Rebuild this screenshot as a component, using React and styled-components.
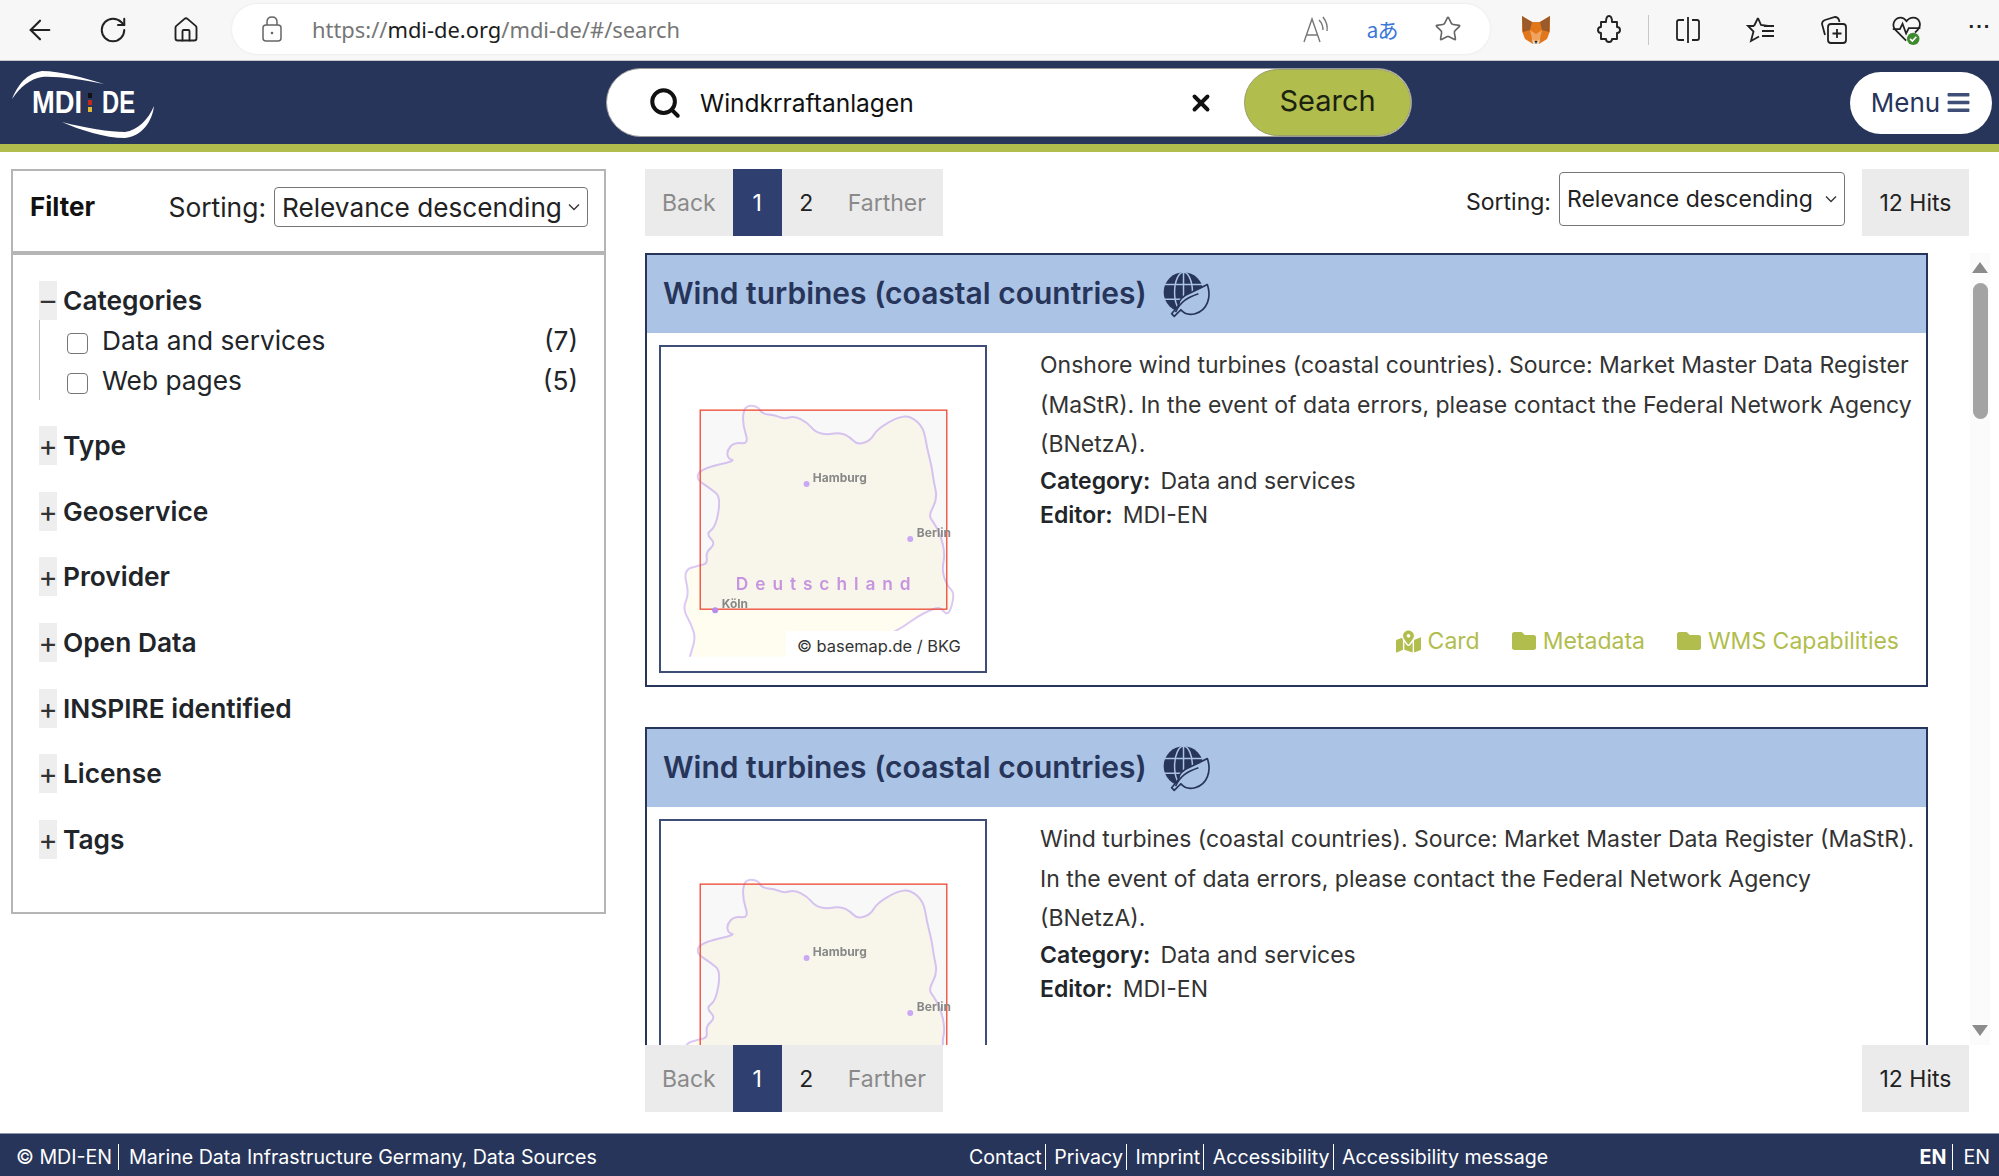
import React from "react";
import styled, { createGlobalStyle } from "styled-components";
import { ArrowLeft, RotateCw, Home, Star, Search, X } from "lucide-react";
import { FaBars, FaFolder, FaMapMarkedAlt } from "react-icons/fa";

const navy = "#27355a";
const olive = "#b1bd4d";
const band = "#abc3e5";

const GlobalStyle = createGlobalStyle`
  html, body {
    margin: 0;
    height: 100%;
    overflow: hidden;
    background: #fff;
    font-family: Inter, "Liberation Sans", sans-serif;
    color: #212529;
  }
  * { box-sizing: border-box; }
`;

const Page = styled.div`
  height: 1176px;
  display: flex;
  flex-direction: column;
`;

/* browser chrome */
const BrowserBar = styled.div`
  height: 61px;
  flex: none;
  display: flex;
  align-items: center;
  padding-left: 22px;
  background: #f7f7f7;
  border-bottom: 1px solid #c9c9c9;
  color: #222;
`;

const ToolGroup = styled.div`
  display: flex;
  align-items: center;
  gap: 37px;
`;

const ToolSlot = styled.div`
  position: relative;
  width: 36px;
  height: 36px;
  display: flex;
  align-items: center;
  justify-content: center;
  color: ${({ $muted }) => ($muted ? "#666" : "#222")};
`;

const ToolDivider = styled.div`
  width: 1px;
  height: 30px;
  margin: 0 -16px;
  background: #c8c8c8;
`;

const AddressPill = styled.div`
  width: 1258px;
  height: 50px;
  margin: 0 28px 2px 28px;
  display: flex;
  align-items: center;
  padding: 0 24px 0 28px;
  background: #fff;
  border-radius: 25px;
  box-shadow: 0 0 3px rgba(0, 0, 0, 0.08);
`;

const Url = styled.div`
  margin-left: 28px;
  flex: 1;
  font-family: "Noto Sans", sans-serif;
  font-size: 21.9px;
  color: #767676;
  b {
    font-weight: 400;
    color: #1c1c1c;
  }
`;

const AddressTools = styled.div`
  display: flex;
  align-items: center;
  gap: 30px;
`;

const TranslateGlyph = styled.span`
  font-family: "Noto Sans CJK JP", sans-serif;
  font-size: 21px;
  letter-spacing: -1px;
  color: #3b78d8;
`;

const MoreDots = styled.span`
  font-family: "Liberation Sans", sans-serif;
  font-weight: 700;
  font-size: 20px;
  letter-spacing: 1px;
  margin-top: -8px;
  color: #222;
`;

/* site header */
const SiteHeader = styled.header`
  height: 83px;
  flex: none;
  display: flex;
  align-items: center;
  background: ${navy};
`;

const LogoWrap = styled.div`
  width: 180px;
  height: 83px;
  flex: none;
  margin-right: 426px;
`;

const SearchBox = styled.div`
  width: 806px;
  height: 69px;
  display: flex;
  align-items: center;
  padding-left: 41px;
  background: #fff;
  border: 1px solid #9a9a9a;
  border-radius: 35px;
`;

const SearchText = styled.div`
  flex: 1;
  margin-left: 18px;
  font-size: 24.5px;
  color: #111;
`;

const SearchButton = styled.button`
  width: 167px;
  height: 67px;
  margin-left: 30px;
  padding: 0 0 4px;
  border: 1px solid #9aa06a;
  border-radius: 34px;
  background: ${olive};
  font-family: inherit;
  font-size: 29px;
  color: #1c2210;
`;

const MenuButton = styled.button`
  width: 142px;
  height: 62px;
  margin-left: auto;
  margin-right: 7px;
  display: flex;
  align-items: center;
  justify-content: center;
  gap: 6px;
  border: none;
  border-radius: 31px;
  background: #fff;
  font-family: inherit;
  font-size: 26px;
  color: #27355a;
  svg {
    color: #3f4e76;
  }
`;

const GreenStripe = styled.div`
  height: 8px;
  flex: none;
  background: ${olive};
`;

/* main */
const Main = styled.main`
  flex: 1;
  min-height: 0;
  display: flex;
  align-items: flex-start;
  padding: 17px 10px 0 11px;
`;

const FilterPanel = styled.aside`
  width: 595px;
  height: 745px;
  flex: none;
  border: 2px solid #b5b5b5;
`;

const FilterHead = styled.div`
  height: 84px;
  display: flex;
  align-items: flex-start;
  padding: 16px 16px 0 17px;
  border-bottom: 4px solid #b5b5b5;
`;

const FilterTitle = styled.div`
  font-size: 26px;
  font-weight: 700;
  line-height: 40px;
  color: #111;
`;

const SortLabel = styled.span`
  margin-left: auto;
  padding-top: ${({ $small }) => ($small ? "5px" : "0")};
  font-size: ${({ $small }) => ($small ? "23px" : "26.4px")};
  line-height: 40px;
  color: #222;
`;

const SortSelect = styled.div`
  width: ${({ $small }) => ($small ? "286px" : "314px")};
  height: ${({ $small }) => ($small ? "54px" : "40px")};
  margin-left: 8px;
  display: flex;
  align-items: center;
  justify-content: space-between;
  padding: ${({ $small }) => ($small ? "0 6px 0 7px" : "0 6px 0 7px")};
  border: 1px solid #767676;
  border-radius: 4px;
  font-size: ${({ $small }) => ($small ? "23px" : "26.2px")};
  color: #222;
  white-space: nowrap;
  background: #fff;
`;

const FilterList = styled.div`
  padding: 26px 26px 0 26px;
`;

const FacetBlock = styled.div`
  margin-bottom: ${({ $open }) => ($open ? "26px" : "26.7px")};
`;

const FacetHead = styled.div`
  height: 39px;
  display: flex;
  align-items: center;
  font-size: 26.3px;
  font-weight: 600;
  color: #212529;
`;

const FacetToggle = styled.span`
  width: 18px;
  height: 39px;
  margin-right: 6px;
  display: flex;
  align-items: center;
  justify-content: center;
  background: #eee;
  font-weight: 400;
  font-size: 29px;
  color: #333;
`;

const FacetBody = styled.div`
  border-left: 1px solid #bdbdbd;
`;

const FacetRow = styled.div`
  height: 40px;
  display: flex;
  align-items: center;
  padding-left: 27px;
  font-size: 26.3px;
  color: #212529;
`;

const CheckBox = styled.span`
  width: 21px;
  height: 21px;
  margin: 6px 14px 0 0;
  flex: none;
  border: 1px solid #767676;
  border-radius: 4px;
  background: #fff;
`;

const FacetCount = styled.span`
  margin-left: auto;
`;

const Results = styled.section`
  width: 1324px;
  margin-left: 39px;
  flex: none;
  display: flex;
  flex-direction: column;
`;

const ResultBar = styled.div`
  height: 67px;
  flex: none;
  display: flex;
  align-items: flex-start;
`;

const Pager = styled.div`
  display: flex;
  height: 67px;
  background: #ebebeb;
  font-size: 23px;
  line-height: 69px;
`;

const PageItem = styled.span`
  padding: 0 17px;
  color: ${({ $dim }) => ($dim ? "#8a8a8a" : "#222")};
`;

const PageNumber = styled.span`
  width: 49px;
  text-align: center;
  color: ${({ $active }) => ($active ? "#fff" : "#222")};
  background: ${({ $active }) => ($active ? "#2f4070" : "transparent")};
`;

const HitCount = styled.div`
  width: 107px;
  height: 67px;
  margin-left: ${({ $push }) => ($push ? "auto" : "16px")};
  text-align: center;
  background: #ebebeb;
  font-size: 23px;
  line-height: 69px;
  color: #222;
`;

const TopSort = styled.div`
  margin-left: auto;
  display: flex;
  align-items: center;
  margin-top: 3px;
  margin-right: 1px;
  height: 54px;
`;

const ScrollArea = styled.div`
  height: 792px;
  flex: none;
  margin-top: 17px;
  display: flex;
  gap: 42px;
  margin-right: -22px;
  overflow: hidden;
`;

const CardList = styled.div`
  width: 1283px;
  flex: none;
  display: flex;
  flex-direction: column;
  gap: 40px;
`;

const Card = styled.article`
  flex: none;
  height: 434px;
  border: 2px solid ${navy};
  display: flex;
  flex-direction: column;
`;

const CardHead = styled.div`
  height: 78px;
  flex: none;
  display: flex;
  align-items: center;
  gap: 16px;
  padding: 0 0 1px 16px;
  background: ${band};
`;

const CardTitle = styled.h2`
  margin: 0 0 2px;
  font-size: 30px;
  font-weight: 600;
  color: ${navy};
`;

const CardBody = styled.div`
  flex: 1;
  display: flex;
  padding: 12px 6px 12px 12px;
`;

const MapFrame = styled.div`
  position: relative;
  width: 328px;
  height: 328px;
  flex: none;
  border: 2px solid #3f4e76;
  background: #fff;
`;

const MapCredit = styled.span`
  position: absolute;
  right: 0;
  bottom: 0;
  width: 199px;
  height: 40px;
  padding: 5px 0 0 11px;
  background: #fff;
  font-size: 16.4px;
  color: #333;
`;

const CardText = styled.div`
  flex: 1;
  display: flex;
  flex-direction: column;
  margin-left: 53px;
  padding-top: 1px;
  font-size: 23px;
  color: #333;
`;

const Description = styled.p`
  margin: 0 0 -1px;
  line-height: 39.5px;
`;

const MetaLine = styled.div`
  display: flex;
  gap: 10px;
  line-height: 34.5px;
  b {
    font-weight: 600;
    color: #212529;
  }
`;

const LinkRow = styled.div`
  margin-top: auto;
  margin-bottom: 18px;
  display: flex;
  justify-content: flex-end;
  gap: 32px;
  padding-right: 21px;
`;

const ResultLink = styled.a`
  display: flex;
  align-items: center;
  gap: 7px;
  font-size: 23px;
  color: ${olive};
`;

const ScrollTrack = styled.div`
  width: 20px;
  flex: none;
  background: #fbfbfb;
  display: flex;
  flex-direction: column;
  align-items: center;
`;

const ScrollArrow = styled.span`
  width: 0;
  height: 0;
  flex: none;
  margin: ${({ $down }) => ($down ? "auto 0 9px" : "9px 0 0")};
  border-left: 8px solid transparent;
  border-right: 8px solid transparent;
  ${({ $down }) => ($down ? "border-top" : "border-bottom")}: 11px solid #8b8b8b;
`;

const ScrollThumb = styled.span`
  width: 15px;
  height: 136px;
  margin-top: 10px;
  border-radius: 8px;
  background: #a3a3a3;
`;

/* footer */
const Footer = styled.footer`
  margin-top: auto;
  height: 43px;
  flex: none;
  display: grid;
  grid-template-columns: 953px 1fr auto;
  align-items: center;
  padding: 4px 9px 0 16px;
  background: ${navy};
  border-top: 1px solid #8d95ab;
  font-size: 19.6px;
  color: #fff;
`;

const FootGroup = styled.div`
  display: flex;
  align-items: center;
`;

const FootItem = styled.span`
  white-space: nowrap;
  padding: ${({ $wide }) => ($wide ? "0 6px 0 10px" : "0 3px 0 0")};
  margin-right: ${({ $wide }) => ($wide ? "0" : "8.5px")};
  border-right: ${({ $last }) => ($last ? "none" : "1px solid #fff")};
  line-height: 26px;
  font-weight: ${({ $bold }) => ($bold ? 700 : 400)};
  &:first-child {
    padding-left: 0;
  }
  &:last-child {
    margin-right: 0;
    padding-right: 0;
  }
`;

const Logo = () => (
  <svg width="180" height="83" viewBox="0 0 180 83">
    <path d="M12 38 C20 19 30 12 42 10 C60 10 85 17 104 23 C80 18 55 15 42 16 C30 18 20 26 12 38Z" fill="#fff" />
    <path d="M62 61 C85 67 110 71 125 71 C138 69 148 59 154 45 C152 61 142 75 125 77 C105 77 80 69 62 61Z" fill="#fff" />
    <text x="32" y="52" fontFamily="Liberation Sans" fontSize="31" fontWeight="700" fill="#fff" textLength="50" lengthAdjust="spacingAndGlyphs">MDI</text>
    <rect x="88" y="32" width="4" height="5" fill="#111" />
    <rect x="88" y="39" width="4" height="5" fill="#c4281c" />
    <rect x="88" y="46" width="4" height="5" fill="#e0b83a" />
    <text x="102" y="52" fontFamily="Liberation Sans" fontSize="31" fontWeight="700" fill="#fff" textLength="33" lengthAdjust="spacingAndGlyphs">DE</text>
  </svg>
);

const LockIcon = () => (
  <svg width="24" height="28" viewBox="0 0 24 28" fill="none" stroke="#666" strokeWidth="1.5">
    <rect x="3" y="10" width="18" height="16" rx="3" />
    <path d="M7 10 V7 Q7 2 12 2 Q17 2 17 7 V10" />
    <circle cx="12" cy="18" r="1.3" fill="#666" stroke="none" />
  </svg>
);

const ReadAloud = () => (
  <svg width="34" height="34" viewBox="0 0 34 34" fill="none" stroke="#777" strokeWidth="1.4">
    <path d="M5 30 L13 7 L21 30 M8 23 H18" />
    <path d="M20 8 C23 11 24 14 24 18 M24 5 C27 9 29 13 28 19" />
  </svg>
);

const Fox = () => (
  <svg width="30" height="30" viewBox="0 0 30 30">
    <path d="M1 1 L11 7 H19 L29 1 L29 16 L26 24 L18 29 H12 L4 24 L1 16Z" fill="#e2761b" />
    <path d="M1 1 L11 7 L9 15 L2 17Z M29 1 L19 7 L21 15 L28 17Z" fill="#9a5a2a" />
    <path d="M9 15 L15 19 L21 15 L19 24 L15 27 L11 24Z" fill="#f0a35c" />
    <path d="M11 24 L15 27 L19 24 L18 29 H12Z" fill="#e8d8c8" />
    <path d="M13.5 26 H16.5 L15 29Z" fill="#222" />
  </svg>
);

const ExtensionIcon = () => (
  <svg width="32" height="32" viewBox="0 0 32 32" fill="none" stroke="#222" strokeWidth="1.9" strokeLinejoin="round">
    <path d="M8 8 H13 C13 4 14 2 16 2 C18 2 19 4 19 8 H24 V13 C28 13 28 19 24 19 V25 H19 C19 29 13 29 13 25 H8 V19 C4 19 4 13 8 13 Z" />
  </svg>
);

const SplitIcon = () => (
  <svg width="30" height="30" viewBox="0 0 30 30" fill="none" stroke="#222" strokeWidth="1.8">
    <path d="M11 5 H6 Q4 5 4 7 V23 Q4 25 6 25 H11 M19 5 H24 Q26 5 26 7 V23 Q26 25 24 25 H19 M15 2 V28" />
  </svg>
);

const FavoritesIcon = () => (
  <svg width="32" height="32" viewBox="0 0 32 32" fill="none" stroke="#222" strokeWidth="1.8">
    <path d="M13 4 L16 11 L23 12 M9 12 H3 L8.5 17.5 L6 27 L14 22.5" />
    <path d="M9 12 L13 4 M17 17 H29 M17 22 H29 M19 12 H29" />
  </svg>
);

const CollectionsIcon = () => (
  <svg width="32" height="32" viewBox="0 0 32 32" fill="none" stroke="#222" strokeWidth="1.8">
    <path d="M7 21 L4 10 Q4 7 7 6 L17 3 Q20 3 21 6 L21.5 8" />
    <rect x="10" y="10" width="18" height="19" rx="3" />
    <path d="M19 15 V24 M14.5 19.5 H23.5" />
  </svg>
);

const HeartCheck = () => (
  <svg width="32" height="32" viewBox="0 0 36 36" fill="none" stroke="#222" strokeWidth="2">
    <path d="M17 30 L5 18 C0 12 4 4 11 4 C14 4 16 6 17.5 8 C19 6 21 4 25 4 C32 4 35 12 30 18 L27 21" />
    <path d="M2 17 H10 L13 11 L17 22 L20 16 H33" />
    <circle cx="25" cy="28" r="7" fill="#3e8a2e" stroke="none" />
    <path d="M21.5 28 L24 30.5 L28.5 25.5" stroke="#fff" strokeWidth="1.8" />
  </svg>
);

const Chevron = () => (
  <svg width="14" height="10" viewBox="0 0 14 10" fill="none" stroke="#333" strokeWidth="1.3">
    <path d="M2 2.5 L7 7.5 L12 2.5" />
  </svg>
);

const GlobeLeaf = () => (
  <svg width="48" height="48" viewBox="98 28 145 145">
    <circle cx="160" cy="95" r="60" fill={navy} />
    <g fill="none" stroke={band} strokeWidth="4.5">
      <path d="M100 72 H220 M100 116 H220 M160 35 V155" />
      <ellipse cx="160" cy="95" rx="27" ry="60" />
    </g>
    <path d="M148 122 C160 100 190 95 232 72 C245 110 232 150 195 160 C175 165 160 158 152 148 L132 168 L124 160 L145 135 Z" fill={band} stroke={navy} strokeWidth="5" strokeLinejoin="round" />
    <path d="M136 155 C150 125 170 112 205 100" fill="none" stroke={navy} strokeWidth="5" />
  </svg>
);

// traced from the thumbnail, coordinates are in a 3x crop of the page
const OUTLINE = [
  [310, 495], [350, 495], [365, 520], [400, 522], [430, 535], [460, 525], [500, 545], [525, 575],
  [560, 582], [600, 575], [630, 590], [650, 612], [690, 600], [710, 565], [770, 530], [810, 525],
  [850, 560], [860, 620], [875, 680], [880, 720], [892, 775], [865, 825], [880, 845], [900, 880],
  [915, 940], [905, 990], [920, 1035], [945, 1060], [925, 1130], [900, 1100], [870, 1110], [830, 1130],
  [790, 1160], [750, 1180], [690, 1250], [680, 1320], [135, 1320], [145, 1250], [165, 1195], [150, 1150],
  [125, 1105], [145, 1060], [127, 990], [175, 975], [200, 970], [195, 935], [225, 910], [195, 880],
  [225, 860], [240, 770], [210, 745], [165, 715], [180, 685], [285, 660], [262, 655], [258, 630],
  [280, 605], [325, 610], [305, 550],
];

const smoothPath = (points) => {
  const mid = (a, b) => [(a[0] + b[0]) / 2, (a[1] + b[1]) / 2];
  const first = mid(points[points.length - 1], points[0]);
  let d = `M${first[0]} ${first[1]}`;
  points.forEach((p, i) => {
    const next = points[(i + 1) % points.length];
    const m = mid(p, next);
    d += ` Q${p[0]} ${p[1]} ${m[0]} ${m[1]}`;
  });
  return d + "Z";
};

const COUNTRY = smoothPath(OUTLINE);

const MapThumb = () => (
  <MapFrame>
    <svg width="324" height="324" viewBox="60 318 975 975">
      <defs>
        <filter id="soft"><feGaussianBlur stdDeviation="2" /></filter>
      </defs>
      <path d={COUNTRY} fill="#fffdf0" stroke="#dcc8f5" strokeWidth="6" filter="url(#soft)" />
      <rect x="60" y="1250" width="975" height="50" fill="#fff" />
      <rect x="178" y="508" width="742" height="599" fill="rgba(30,40,70,0.03)" stroke="#ef4a36" strokeWidth="4" />
      <g filter="url(#soft)">
        <circle cx="498" cy="730" r="9" fill="#c9a9f5" />
        <circle cx="810" cy="896" r="9" fill="#c9a9f5" />
        <circle cx="223" cy="1110" r="9" fill="#b98af0" />
        <text x="517" y="724" fontFamily="Inter" fontSize="36" fontWeight="700" fill="#888">Hamburg</text>
        <text x="830" y="890" fontFamily="Inter" fontSize="36" fontWeight="700" fill="#888">Berlin</text>
        <text x="243" y="1102" fontFamily="Inter" fontSize="36" fontWeight="700" fill="#888">Köln</text>
        <text x="285" y="1048" fontFamily="Inter" fontSize="52" fontWeight="600" fill="#c795e0" letterSpacing="21">Deutschland</text>
      </g>
    </svg>
    <MapCredit>© basemap.de / BKG</MapCredit>
  </MapFrame>
);

const facets = ["Type", "Geoservice", "Provider", "Open Data", "INSPIRE identified", "License", "Tags"];

const results = [
  {
    text: "Onshore wind turbines (coastal countries). Source: Market Master Data Register (MaStR). In the event of data errors, please contact the Federal Network Agency (BNetzA).",
  },
  {
    text: "Wind turbines (coastal countries). Source: Market Master Data Register (MaStR). In the event of data errors, please contact the Federal Network Agency (BNetzA).",
  },
];

const PagerBlock = () => (
  <Pager>
    <PageItem $dim>Back</PageItem>
    <PageNumber $active>1</PageNumber>
    <PageNumber>2</PageNumber>
    <PageItem $dim>Farther</PageItem>
  </Pager>
);

export default function App() {
  return (
    <Page>
      <GlobalStyle />
      <BrowserBar>
        <ToolGroup>
          <ToolSlot><ArrowLeft size={32} strokeWidth={1.6} /></ToolSlot>
          <ToolSlot><RotateCw size={30} strokeWidth={1.6} /></ToolSlot>
          <ToolSlot><Home size={28} strokeWidth={1.6} /></ToolSlot>
        </ToolGroup>
        <AddressPill>
          <LockIcon />
          <Url>https://<b>mdi-de.org</b>/mdi-de/#/search</Url>
          <AddressTools>
            <ToolSlot $muted><ReadAloud /></ToolSlot>
            <ToolSlot><TranslateGlyph>aあ</TranslateGlyph></ToolSlot>
            <ToolSlot $muted><Star size={28} strokeWidth={1.4} /></ToolSlot>
          </AddressTools>
        </AddressPill>
        <ToolGroup>
          <ToolSlot><Fox /></ToolSlot>
          <ToolSlot><ExtensionIcon /></ToolSlot>
          <ToolDivider />
          <ToolSlot><SplitIcon /></ToolSlot>
          <ToolSlot><FavoritesIcon /></ToolSlot>
          <ToolSlot><CollectionsIcon /></ToolSlot>
          <ToolSlot><HeartCheck /></ToolSlot>
          <ToolSlot><MoreDots>···</MoreDots></ToolSlot>
        </ToolGroup>
      </BrowserBar>

      <SiteHeader>
        <LogoWrap><Logo /></LogoWrap>
        <SearchBox>
          <Search size={34} strokeWidth={2.8} color="#111" />
          <SearchText>Windkrraftanlagen</SearchText>
          <X size={26} strokeWidth={3.6} color="#111" />
          <SearchButton>Search</SearchButton>
        </SearchBox>
        <MenuButton>Menu <FaBars size={25} /></MenuButton>
      </SiteHeader>
      <GreenStripe />

      <Main>
        <FilterPanel>
          <FilterHead>
            <FilterTitle>Filter</FilterTitle>
            <SortLabel>Sorting:</SortLabel>
            <SortSelect>Relevance descending <Chevron /></SortSelect>
          </FilterHead>
          <FilterList>
            <FacetBlock $open>
              <FacetHead><FacetToggle>–</FacetToggle>Categories</FacetHead>
              <FacetBody>
                <FacetRow><CheckBox />Data and services<FacetCount>(7)</FacetCount></FacetRow>
                <FacetRow><CheckBox />Web pages<FacetCount>(5)</FacetCount></FacetRow>
              </FacetBody>
            </FacetBlock>
            {facets.map((name) => (
              <FacetBlock key={name}>
                <FacetHead><FacetToggle>+</FacetToggle>{name}</FacetHead>
              </FacetBlock>
            ))}
          </FilterList>
        </FilterPanel>

        <Results>
          <ResultBar>
            <PagerBlock />
            <TopSort>
              <SortLabel $small>Sorting:</SortLabel>
              <SortSelect $small>Relevance descending <Chevron /></SortSelect>
            </TopSort>
            <HitCount>12 Hits</HitCount>
          </ResultBar>
          <ScrollArea>
            <CardList>
              {results.map((item, index) => (
                <Card key={index}>
                  <CardHead>
                    <CardTitle>Wind turbines (coastal countries)</CardTitle>
                    <GlobeLeaf />
                  </CardHead>
                  <CardBody>
                    <MapThumb />
                    <CardText>
                      <Description>{item.text}</Description>
                      <MetaLine><b>Category:</b> Data and services</MetaLine>
                      <MetaLine><b>Editor:</b> MDI-EN</MetaLine>
                      <LinkRow>
                        <ResultLink><FaMapMarkedAlt size={25} /> Card</ResultLink>
                        <ResultLink><FaFolder size={24} /> Metadata</ResultLink>
                        <ResultLink><FaFolder size={24} /> WMS Capabilities</ResultLink>
                      </LinkRow>
                    </CardText>
                  </CardBody>
                </Card>
              ))}
            </CardList>
            <ScrollTrack>
              <ScrollArrow />
              <ScrollThumb />
              <ScrollArrow $down />
            </ScrollTrack>
          </ScrollArea>
          <ResultBar>
            <PagerBlock />
            <HitCount $push>12 Hits</HitCount>
          </ResultBar>
        </Results>
      </Main>

      <Footer>
        <FootGroup>
          <FootItem $wide>© MDI-EN</FootItem>
          <FootItem $wide $last>Marine Data Infrastructure Germany, Data Sources</FootItem>
        </FootGroup>
        <FootGroup>
          <FootItem>Contact</FootItem>
          <FootItem>Privacy</FootItem>
          <FootItem>Imprint</FootItem>
          <FootItem>Accessibility</FootItem>
          <FootItem $last>Accessibility message</FootItem>
        </FootGroup>
        <FootGroup>
          <FootItem $wide $bold>EN</FootItem>
          <FootItem $wide $last>EN</FootItem>
        </FootGroup>
      </Footer>
    </Page>
  );
}
